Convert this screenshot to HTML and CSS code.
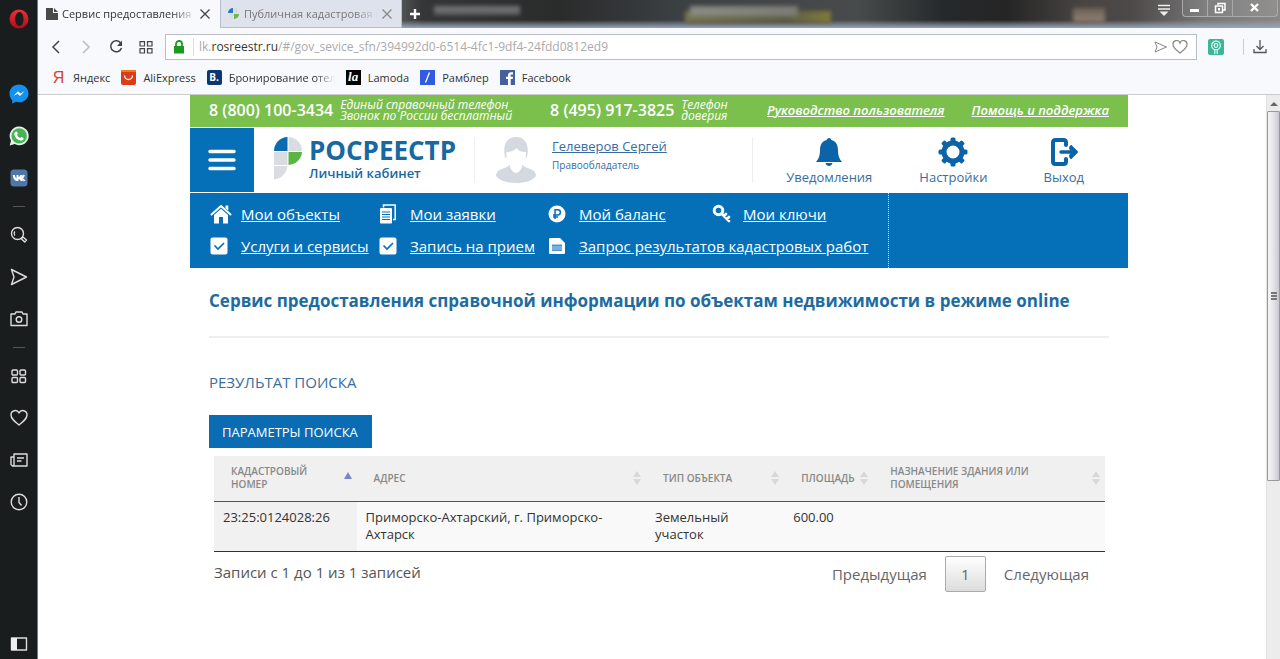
FILE: index.html
```html
<!DOCTYPE html>
<html lang="ru">
<head>
<meta charset="utf-8">
<title>Сервис предоставления справочной информации</title>
<link rel="stylesheet" href="styles.css">
</head>
<body>
<div class="browser">
  <aside class="sidebar">
    <button class="side-btn opera" aria-label="Opera"><svg width="20" height="20" viewBox="0 0 20 20"><defs><linearGradient id="og" x1="0" y1="0" x2="0" y2="1"><stop offset="0" stop-color="#f0303c"/><stop offset="1" stop-color="#a80f1c"/></linearGradient></defs><path fill="url(#og)" fill-rule="evenodd" d="M10 0.500a9.500 9.500 0 1 0 0 19a9.500 9.500 0 1 0 0-19zM10.500 3c2.500 0 4 3 4 7s-1.500 7-4 7s-4.300-3-4.300-7s1.800-7 4.300-7z"/></svg></button>
    <button class="side-btn" aria-label="Messenger"><svg width="20" height="20" viewBox="0 0 20 20"><path fill="#1491ee" d="M10 .5c5.400 0 9.500 3.900 9.500 8.900s-4.100 8.800-9.500 8.800c-1.200 0-2.200-.1-3.200-.4L3.200 19.500v-3.300C1.500 14.600.5 12.200.5 9.400.5 4.400 4.600.5 10 .5z"/><path fill="#fff" d="M4.500 12 9 7.200l2.300 2.300 4.200-2.300-4.500 4.800-2.300-2.300z"/></svg></button>
    <button class="side-btn" aria-label="WhatsApp"><svg width="20" height="20" viewBox="0 0 20 20"><path fill="#e8f0e8" d="M10.200.5a9.400 9.400 0 1 1-4.500 17.600L.7 19.500 2 14.700A9.400 9.400 0 0 1 10.200.5z"/><circle cx="10.200" cy="9.900" r="7.700" fill="#46b455"/><path fill="#fff" d="M7.200 5.400c.6 0 .8.200 1 .7l.6 1.500c.2.500-.6 1-.8 1.400.8 1.500 1.900 2.500 3.300 3.100.5-.3.900-1.200 1.400-1l1.700.9c.4.200.2 1.100-.1 1.600-.6.900-2 1.200-3 .9-3-.8-5.300-3-6-5.500-.3-1.300.6-3.600 1.900-3.600z"/></svg></button>
    <button class="side-btn" aria-label="VK"><svg width="18" height="18" viewBox="0 0 18 18"><rect x=".5" y=".5" width="17" height="17" rx="3.500" fill="#4f78a8"/><path fill="#fff" d="M2.800 6h2c.2 1.700.9 2.800 1.700 3.400V6h2v2c.9-.2 1.500-1 1.900-2h2c-.3 1.300-1.100 2.200-1.800 2.700.9.500 1.900 1.500 2.300 3.300h-2.200c-.3-1-1-1.800-2.200-2V12h-.6C5 12 3 10 2.800 6z"/><path fill="none" stroke="#fff" stroke-width="1.800" d="M10 9c2 0 3.500-1.200 4-3M11 9c1.500.5 2.800 1.300 3.500 3"/></svg></button>
    <hr class="side-rule">
    <button class="side-btn" aria-label="Поиск"><svg width="18" height="18" viewBox="0 0 18 18"><g class="ln"><circle cx="7.500" cy="7.500" r="6"/><path d="M4.800 5.500a3.300 3.300 0 0 0 0 4M12 12l1-1 3.500 3-1.800 2L11.500 13z"/></g></svg></button>
    <button class="side-btn" aria-label="Моя лента"><svg width="18" height="18" viewBox="0 0 18 18"><path class="ln" d="M1.500 1.500 16.500 9l-15 7.500L4 9z"/></svg></button>
    <button class="side-btn" aria-label="Снимок"><svg width="18" height="18" viewBox="0 0 18 18"><g class="ln"><path d="M1 4h4l1-2h6l1 2h4v11.500H1z"/><circle cx="9" cy="9.500" r="2.800"/></g></svg></button>
    <hr class="side-rule">
    <button class="side-btn" aria-label="Экспресс-панель"><svg width="18" height="18" viewBox="0 0 18 18"><g class="ln"><rect x="2" y="3" width="5.500" height="5" rx="1"/><rect x="10" y="3" width="5.500" height="5" rx="1"/><rect x="2" y="10.500" width="5.500" height="5" rx="1"/><rect x="10" y="10.500" width="5.500" height="5" rx="1"/></g></svg></button>
    <button class="side-btn" aria-label="Закладки"><svg width="18" height="18" viewBox="0 0 18 18"><path class="ln" d="M9 16C4 12 1 9.500 1 6a4.200 4.200 0 0 1 8-2 4.200 4.200 0 0 1 8 2c0 3.500-3 6-8 10z"/></svg></button>
    <button class="side-btn" aria-label="Новости"><svg width="18" height="18" viewBox="0 0 18 18"><g class="ln"><path d="M4 3h13v12H2.500L1 13.500V6h3zM4 3v12M7 7h7M7 10h4.500"/></g></svg></button>
    <button class="side-btn" aria-label="История"><svg width="18" height="18" viewBox="0 0 18 18"><g class="ln"><circle cx="9" cy="9" r="7.800"/><path d="M9 4v5.500l2.500 3"/></g></svg></button>
    <button class="side-btn side-last" aria-label="Боковая панель"><svg width="18" height="14" viewBox="0 0 18 14"><rect class="ln" x="1.500" y="1" width="15" height="12"/><path fill="#eee" d="M1 1h6v12H1z"/></svg></button>
  </aside>

  <div class="window">
    <div class="tabs">
      <div class="tab active">
        <svg width="12" height="14" viewBox="0 0 12 14"><path fill="#4a4a4a" d="M0 1h7v5h5v7H0zM8 1l4 4H8z"/></svg>
        <span class="tab-title">Сервис предоставления справочной</span>
        <button class="x" aria-label="Закрыть вкладку"><svg width="10" height="10" viewBox="0 0 10 10"><path stroke="#444" stroke-width="1.300" d="m.5.5 9 9m0-9-9 9"/></svg></button>
      </div>
      <div class="tab">
        <svg width="12" height="14" viewBox="0 0 12 14"><path fill="#2c78b8" d="M0 6a5 5 0 0 1 5-5v5z"/><path fill="#69b84c" d="M6 7h5a5 5 0 0 1-5 5z"/><path fill="#d8dbe0" d="M6 1a5 5 0 0 1 5 5H6zM0 7h5v5z"/></svg>
        <span class="tab-title">Публичная кадастровая карта</span>
        <button class="x" aria-label="Закрыть вкладку"><svg width="10" height="10" viewBox="0 0 10 10"><path stroke="#888" stroke-width="1.300" d="m.5.5 9 9m0-9-9 9"/></svg></button>
      </div>
      <button class="new-tab" aria-label="Новая вкладка"><svg width="12" height="12" viewBox="0 0 12 12"><path stroke="#fff" stroke-width="2.400" d="M6 1v10M1 6h10"/></svg></button>
      <div class="glass"></div>
      <button class="tab-menu" aria-label="Меню вкладок"><svg width="14" height="14" viewBox="0 0 14 14"><path stroke="#eee" stroke-width="1.500" d="M1 2.500h12M1 6h12"/><path fill="#eee" d="M2.500 8.500h9L7 13z"/></svg></button>
      <div class="win-btns">
        <button aria-label="Свернуть"><svg width="12" height="12" viewBox="0 0 12 12"><path fill="#fff" d="M1 7h9v3H1z"/></svg></button>
        <button aria-label="Развернуть"><svg width="12" height="12" viewBox="0 0 12 12"><path fill="none" stroke="#fff" stroke-width="1.500" d="M4 3V1.500h7V8H9M1.500 4h7v6.500h-7z"/><path fill="#fff" d="M4 6h2v2.500H4z"/></svg></button>
        <button class="win-close" aria-label="Закрыть"><svg width="12" height="12" viewBox="0 0 12 12"><path stroke="#fff" stroke-width="2.400" d="m2 2 7 7m0-7-7 7"/></svg></button>
      </div>
    </div>

    <div class="toolbar">
      <button aria-label="Назад"><svg width="14" height="16" viewBox="0 0 14 16"><path fill="none" stroke="#444" stroke-width="1.500" d="M10 2 4 8l6 6"/></svg></button>
      <button aria-label="Вперёд"><svg width="14" height="16" viewBox="0 0 14 16"><path fill="none" stroke="#bbb" stroke-width="1.500" d="m4 2 6 6-6 6"/></svg></button>
      <button aria-label="Обновить"><svg width="14" height="16" viewBox="0 0 14 16"><path fill="none" stroke="#444" stroke-width="1.500" d="M12 4.500A5.500 5.500 0 1 0 12.500 9"/><path fill="#444" d="M13 1.500V7H8z"/></svg></button>
      <button aria-label="Экспресс-панель"><svg width="14" height="16" viewBox="0 0 14 16"><path fill="none" stroke="#444" stroke-width="1.200" d="M1 2.600h4.500V7H1zM8.500 2.600H13V7H8.500zM1 9.600h4.500V14H1zM8.500 9.600H13V14H8.500z"/></svg></button>
      <div class="address">
        <svg width="12" height="14" viewBox="0 0 12 14"><path fill="#1a9a1f" d="M1 6h10v7.500H1z"/><path fill="none" stroke="#1a9a1f" stroke-width="1.800" d="M3 7V4a3 3 0 0 1 6 0v3"/></svg>
        <span class="url">lk.<b>rosreestr.ru</b>/#/gov_sevice_sfn/394992d0-6514-4fc1-9df4-24fdd0812ed9</span>
        <button aria-label="Отправить"><svg width="14" height="12" viewBox="0 0 14 12"><path fill="none" stroke="#888" d="M1 1l11.500 5L1 11l2-5z"/></svg></button>
        <button aria-label="В избранное"><svg width="16" height="14" viewBox="0 0 16 14"><path fill="none" stroke="#888" stroke-width="1.200" d="M8 13C4 10 1 7.500 1 4.500A3.600 3.600 0 0 1 8 3a3.600 3.600 0 0 1 7 1.500C15 7.500 12 10 8 13z"/></svg></button>
      </div>
      <button class="ext" aria-label="Расширение"><svg width="16" height="16" viewBox="0 0 16 16"><rect width="16" height="16" rx="2" fill="#3fb598"/><g fill="none" stroke="#d8fff4" stroke-width="1.200"><circle cx="8" cy="6.500" r="4.300"/><circle cx="8" cy="6.500" r="1.800"/><path d="M6.800 11v4M9.200 11v4"/></g></svg></button>
      <span class="vline"></span>
      <button aria-label="Загрузки"><svg width="14" height="14" viewBox="0 0 14 14"><path fill="none" stroke="#555" stroke-width="1.300" d="M7 0v9M3.500 6 7 9.500 10.500 6M1 9v3.500h12V9"/></svg></button>
    </div>

    <nav class="bookmarks" aria-label="Панель закладок">
      <a href="#"><span class="fav ya">Я</span>Яндекс</a>
      <a href="#"><svg width="15" height="15" viewBox="0 0 15 15"><rect width="15" height="15" rx="2" fill="#dc3b17"/><path fill="#f07a1e" d="M0 0h15v2H0z"/><path fill="none" stroke="#fff" stroke-width="1.300" d="M3.500 5.500a4 4 0 0 0 8 0"/></svg>AliExpress</a>
      <a href="#"><span class="fav bk">B.</span><span class="fade-text">Бронирование отелей</span></a>
      <a href="#"><span class="fav la">la</span>Lamoda</a>
      <a href="#"><svg width="15" height="15" viewBox="0 0 15 15"><path fill="#315be0" d="M0 0h15v15H0z"/><path stroke="#fff" stroke-width="1.300" d="M9.500 2.500l-4 10"/></svg>Рамблер</a>
      <a href="#"><svg width="15" height="15" viewBox="0 0 15 15"><path fill="#45619d" d="M0 0h15v15H0z"/><path fill="#fff" d="M8 15V9H6V6.800h2V5.300C8 3.300 9.200 2.300 11 2.300h2v2.300h-1.300c-.8 0-1 .3-1 1v1.200H13L12.700 9h-2v6z"/></svg>Facebook</a>
    </nav>

    <div class="viewport">
      <div class="page">
        <header>
          <div class="top">
            <span class="phone">8 (800) 100-3434</span>
            <em class="note note-wide">Единый справочный телефон<br>Звонок по России бесплатный</em>
            <span class="phone">8 (495) 917-3825</span>
            <em class="note">Телефон<br>доверия</em>
            <a class="help first" href="#">Руководство пользователя</a>
            <a class="help" href="#">Помощь и поддержка</a>
          </div>
          <div class="head">
            <button class="burger" aria-label="Меню"><svg width="28" height="22" viewBox="0 0 28 22"><path stroke="#fff" stroke-width="3.500" stroke-linecap="round" d="M2 2.500h24M2 11h24M2 19.500h24"/></svg></button>
            <a class="logo" href="#">
              <svg width="28" height="43" viewBox="0 0 28 43"><path fill="#0b6bb0" d="M0 14A14 14 0 0 1 13.500 0v14z"/><path fill="#d9dde2" d="M14.500 0A14 14 0 0 1 28 14H14.500zM0 15h13.500v13H0zM0 29h13.500A15 15 0 0 1 0 42.500z"/><path fill="#5ab543" d="M14.500 15H28a14 14 0 0 1-13.500 13z"/></svg>
              <span class="logo-text"><strong>РОСРЕЕСТР</strong><span>Личный кабинет</span></span>
            </a>
            <div class="user">
              <svg width="40" height="46" viewBox="0 0 40 46"><path fill="#d3d9df" d="M0 39c0-6 6-7 11-9l3-2h12l3 2c5 2 11 3 11 9-4 5-11 7-20 7S4 44 0 39z"/><path fill="#fff" d="M14 25h12v5c-1 3-4 6-6 6s-5-3-6-6z"/><path fill="#d3d9df" d="M8.500 17C7 6 12 0 20 0s13 6 11.500 17c0 3-1 4-2 4h-19c-1 0-2-1-2-4z"/><path fill="#fff" d="M10.500 15c6 0 8-2 10-4 2 3 5 4 9.500 4 1 8-4 15-10 15s-10.500-7-9.500-15z"/></svg>
              <div class="user-text"><a href="#">Гелеверов Сергей</a><span>Правообладатель</span></div>
            </div>
            <div class="actions">
              <a href="#"><svg width="28" height="30" viewBox="0 0 28 30"><path fill="#0b64a8" d="M14 1c1.500 0 2 1 2.200 2C21 4 23 8 23 13c0 6 1.500 9 4 12H1c2.500-3 4-6 4-12 0-5 2-9 6.800-10 .2-1 .7-2 2.200-2zM10.500 26h7c-.5 2-2 3-3.500 3s-3-1-3.500-3z"/></svg>Уведомления</a>
              <a href="#"><svg width="30" height="30" viewBox="-15 -15 30 30"><g fill="#0b64a8"><path fill-rule="evenodd" d="M0-11.500a11.500 11.500 0 1 0 0 23a11.500 11.500 0 1 0 0-23zM0-6.500a6.500 6.500 0 1 1 0 13a6.500 6.500 0 1 1 0-13z"/><g id="cog"><rect x="-2.500" y="-14.500" width="5" height="5" rx="1.500"/><rect x="-2.500" y="9.500" width="5" height="5" rx="1.500"/><rect x="-14.500" y="-2.500" width="5" height="5" rx="1.500"/><rect x="9.500" y="-2.500" width="5" height="5" rx="1.500"/></g><use href="#cog" transform="rotate(45)"/></g></svg>Настройки</a>
              <a href="#"><svg width="28" height="30" viewBox="0 0 28 30"><path fill="none" stroke="#0b64a8" stroke-width="4" stroke-linecap="round" stroke-linejoin="round" d="M16 8V5.500C16 4 15 3 13.500 3h-8C4 3 3 4 3 5.500v19C3 26 4 27 5.500 27h8c1.500 0 2.500-1 2.500-2.500V22"/><path stroke="#0b64a8" stroke-width="3.500" stroke-linecap="round" d="M11 15h12"/><path fill="#0b64a8" stroke="#0b64a8" stroke-width="2" stroke-linejoin="round" d="m21 9 6 6-6 6-1-2 2-4-2-4z"/></svg>Выход</a>
            </div>
          </div>
          <nav class="menu" aria-label="Разделы">
            <div class="menu-grid">
              <a href="#"><svg width="22" height="20" viewBox="0 0 22 20"><path fill="none" stroke="#fff" stroke-width="2" stroke-linecap="round" stroke-linejoin="round" d="M1.500 10.500 11 2l9.500 8.500"/><path fill="#fff" d="M15.500 1.500h2.800v5l-2.800-2.300zM4 11l7-6.200 7 6.200v8.500h-5V13H9v6.500H4z"/></svg><span>Мои объекты</span></a>
              <a href="#"><svg width="18" height="20" viewBox="0 0 18 20"><path fill="none" stroke="#fff" stroke-width="1.500" d="M4.500 3.500V1h11.700v14.500H14"/><rect x="1" y="4" width="12" height="15.500" rx="1" fill="#fff"/><path stroke="#0570b8" d="M3 8h8M3 10.500h8M3 13h8M3 15.500h8"/></svg><span>Мои заявки</span></a>
              <a href="#"><svg width="18" height="18" viewBox="0 0 18 18"><circle cx="9" cy="9" r="8.500" fill="#fff"/><path fill="none" stroke="#0570b8" stroke-width="1.500" d="M7 14V4.700h2.800a2.600 2.600 0 0 1 0 5.200H5M5 12h5"/></svg><span>Мой баланс</span></a>
              <a href="#"><svg width="20" height="20" viewBox="0 0 20 20"><g fill="none" stroke="#fff" stroke-linecap="round"><circle cx="6.500" cy="6.500" r="4.300" stroke-width="3"/><path stroke-width="2.700" d="m10 10 7 7M15 15l2-2M12 12l2-2"/></g></svg><span>Мои ключи</span></a>
              <a href="#"><svg width="18" height="18" viewBox="0 0 18 18"><rect x=".5" y=".5" width="17" height="17" rx="2" fill="#fff"/><path fill="none" stroke="#0570b8" stroke-width="1.700" d="m4.500 8.500 3.500 3.500 6-6"/></svg><span>Услуги и сервисы</span></a>
              <a href="#"><svg width="18" height="18" viewBox="0 0 18 18"><rect x=".5" y=".5" width="17" height="17" rx="2" fill="#fff"/><path fill="none" stroke="#0570b8" stroke-width="1.700" d="m4.500 8.500 3.500 3.500 6-6"/></svg><span>Запись на прием</span></a>
              <a href="#" class="wide"><svg width="18" height="18" viewBox="0 0 18 18"><path fill="#fff" d="M1 2.500C1 1.500 1.500 1 2.500 1H12l5 5v9.500c0 1-.5 1.500-1.500 1.500h-13C1.500 17 1 16.500 1 15.500z"/><path fill="#4b95cc" d="M4 7.500h10V14H4z"/><path stroke="#a9cde8" d="M4 10h10M4 12h10"/></svg><span>Запрос результатов кадастровых работ</span></a>
            </div>
          </nav>
        </header>
        <main>
          <h1>Сервис предоставления справочной информации по объектам недвижимости в режиме online</h1>
          <h2>РЕЗУЛЬТАТ ПОИСКА</h2>
          <button class="params">ПАРАМЕТРЫ ПОИСКА</button>
          <div class="results">
            <table>
              <colgroup><col class="c1"><col class="c2"><col class="c3"><col class="c4"><col class="c5"></colgroup>
              <thead><tr>
                <th scope="col"><div class="th"><span>КАДАСТРОВЫЙ НОМЕР</span><svg width="8" height="14" viewBox="0 0 8 14"><path fill="#7a84c8" d="M0 8l4-7 4 7z"/></svg></div></th>
                <th scope="col"><div class="th"><span>АДРЕС</span><svg width="8" height="14" viewBox="0 0 8 14"><path fill="#d8d8d8" d="M0 6l4-6 4 6zM0 8h8l-4 6z"/></svg></div></th>
                <th scope="col"><div class="th"><span>ТИП ОБЪЕКТА</span><svg width="8" height="14" viewBox="0 0 8 14"><path fill="#d8d8d8" d="M0 6l4-6 4 6zM0 8h8l-4 6z"/></svg></div></th>
                <th scope="col"><div class="th"><span>ПЛОЩАДЬ</span><svg width="8" height="14" viewBox="0 0 8 14"><path fill="#d8d8d8" d="M0 6l4-6 4 6zM0 8h8l-4 6z"/></svg></div></th>
                <th scope="col"><div class="th"><span>НАЗНАЧЕНИЕ ЗДАНИЯ ИЛИ<br>ПОМЕЩЕНИЯ</span><svg width="8" height="14" viewBox="0 0 8 14"><path fill="#d8d8d8" d="M0 6l4-6 4 6zM0 8h8l-4 6z"/></svg></div></th>
              </tr></thead>
              <tbody><tr><td class="sorted">23:25:0124028:26</td><td>Приморско-Ахтарский, г. Приморско-Ахтарск</td><td>Земельный участок</td><td>600.00</td><td></td></tr></tbody>
            </table>
            <div class="pager">
              <span class="info">Записи с 1 до 1 из 1 записей</span>
              <button class="pg">Предыдущая</button>
              <button class="pg current">1</button>
              <button class="pg">Следующая</button>
            </div>
          </div>
        </main>
      </div>
      <div class="scrollbar">
        <svg class="arrow" width="8" height="5" viewBox="0 0 8 5"><path fill="#666" d="M0 5l4-4 4 4z"/></svg>
        <div class="thumb"><i></i><i></i><i></i></div>
      </div>
    </div>
  </div>
</div>
</body>
</html>
```

FILE: styles.css
```css
* { box-sizing: border-box; }
body { margin: 0; font-family: "Open Sans", "Noto Sans", sans-serif; color: #333; }
button { border: 0; padding: 0; background: none; font: inherit; color: inherit; cursor: pointer; }
svg { display: block; flex: none; }
.browser { display: flex; min-height: 100vh; background: #fff; }

/* Opera sidebar */
.sidebar { width: 38px; flex: none; display: flex; flex-direction: column; background: #1a1d1e; border-right: 1px solid #777; }
.side-btn { height: 42px; display: grid; place-items: center; }
.opera { height: 37px; margin-bottom: 36px; }
.side-last { height: 30px; margin-top: auto; }
.side-rule { width: 12px; height: 1px; margin: 7px auto; border: 0; background: #555; }
.ln { fill: none; stroke: #ddd; stroke-width: 1.4; stroke-linejoin: round; }

.window { flex: 1; min-width: 0; display: flex; flex-direction: column; }

/* Tabs */
.tabs { display: flex; height: 28px; background: linear-gradient(#0000 20px, #98a5b8), linear-gradient(90deg, #666 28%, #343637 31%, #2a2b2b 42%, #3c4144 52%, #484b4b 66%, #25292b 73%, #252525 78%, #484442 84%, #4c4948 88%, #777 94%, #8a8887); }
.tab { width: 182px; display: flex; align-items: center; gap: 4px; padding: 0 9px 0 7px; background: #dee2ed; border: 1px solid #b6bdd0; border-top: 0; font-size: 11px; color: #777; }
.tab.active { background: #f7f9fc; color: #333; border-color: #f7f9fc; }
.tab-title { flex: 1; overflow: hidden; white-space: nowrap; mask-image: linear-gradient(90deg, #000 82%, transparent); }
.new-tab { width: 26px; display: grid; place-items: center; }
.glass { flex: 1; height: 24px; filter: blur(2px); background-image: linear-gradient(#77797a, #5c5e5e), linear-gradient(90deg, #8a8a82, #7c7c74), linear-gradient(90deg, #77744f, #5f5d46 70%, #807a3a), linear-gradient(#6d6058, #93806f); background-size: 86px 9px, 108px 10px, 146px 12px, 32px 14px; background-position: 1% 40%, 43% 40%, 45% 95%, 94% 80%; background-repeat: no-repeat; }
.tab-menu { width: 36px; height: 19px; display: grid; place-items: center; }
.win-btns { display: flex; height: 17px; margin-right: 2px; border: 1px solid #aaa; border-top: 0; border-radius: 0 0 4px 4px; }
.win-btns button { width: 25px; display: grid; place-items: center; border-right: 1px solid #aaa; background: #fff1; }
.win-btns .win-close { width: 44px; border: 0; }

/* Address row */
.toolbar { display: flex; align-items: center; gap: 16px; height: 37px; padding: 0 13px 0 11px; background: #f7f9fc; }
.address { flex: 1; display: flex; align-items: center; gap: 4px; height: 26px; margin-left: -4px; padding: 0 8px 0 7px; background: #fff; border: 1px solid #b9bec6; }
.url { flex: 1; margin-left: 4px; padding-left: 5px; border-left: 1px solid #ddd; font-size: 12px; line-height: 18px; color: #aaa; white-space: nowrap; }
.url b { font-weight: 400; color: #333; }
.ext { margin-left: -5px; }
.vline { width: 1px; height: 16px; margin-left: 3px; margin-right: -7px; background: #ccc; }
.bookmarks { display: flex; align-items: center; gap: 11px; height: 30px; padding: 0 13px 4px; background: #f7f9fc; border-bottom: 1px solid #ccc; font-size: 11px; }
.bookmarks a { display: flex; align-items: center; gap: 7px; color: #333; text-decoration: none; white-space: nowrap; }
.fav { width: 15px; height: 15px; text-align: center; font: bold 10px/15px "Open Sans", sans-serif; color: #fff; }
.ya { font: 16px/15px "Liberation Sans", sans-serif; color: #d8432e; }
.bk { background: #0d3474; border-radius: 2px; }
.la { background: #000; font: italic bold 13px/14px "Liberation Serif", serif; }
.fade-text { width: 106px; overflow: hidden; mask-image: linear-gradient(90deg, #000 82%, transparent); }

/* Page */
.viewport { flex: 1; display: flex; }
.page { flex: 1; min-width: 0; padding: 0 138px 0 152px; }
.top { display: flex; align-items: center; height: 32px; padding: 0 19px 2px; background: #7bc04d; color: #fff; white-space: nowrap; }
.phone { font-size: 16px; font-weight: 600; }
.note { margin-left: 7px; font-size: 12px; line-height: 11px; }
.note-wide { margin-right: 38px; }
.help { margin-left: 27px; font-size: 13px; font-style: italic; font-weight: 600; color: #fff; }
.help.first { margin-left: auto; }
.head { display: flex; height: 66px; padding: 1px 0; }
.burger { width: 64px; display: grid; place-items: center; background: #0570b8; }
.logo { display: flex; gap: 7px; padding: 9px 18px 0 20px; color: #17699f; text-decoration: none; }
.logo-text { display: flex; flex-direction: column; }
.logo-text strong { font-size: 26px; line-height: 26px; }
.logo-text span { font-size: 13px; line-height: 20px; font-weight: 600; }
.user { flex: 1; display: flex; gap: 16px; margin: 9px 0; padding-left: 21px; border-left: 1px solid #eee; border-right: 1px solid #eee; color: #386e9f; }
.user-text { display: flex; flex-direction: column; }
.user-text a { font-size: 13px; line-height: 18px; color: #386e9f; }
.user-text span { font-size: 10px; line-height: 20px; }
.actions { display: flex; gap: 47px; padding: 9px 44px 0 33px; }
.actions a { display: flex; flex-direction: column; align-items: center; font-size: 13px; line-height: 21px; color: #386e9f; text-decoration: none; }
.actions a:last-child { margin-left: 9px; }
.menu { display: flex; height: 75px; background: #0570b8; }
.menu-grid { flex: 0 0 699px; display: grid; grid-template-columns: 169px 169px 164px auto; grid-auto-rows: 32px; padding: 5px 0 0 20px; border-right: 1px dotted #cde; }
.menu a { display: grid; grid-template-columns: 31px auto; align-items: center; justify-content: start; font-size: 15px; color: #fff; white-space: nowrap; text-decoration: none; }
.menu a span { text-decoration: underline; }
.wide { grid-column: span 2; }

main { padding: 20px 19px; }
h1, h2 { white-space: nowrap; }
h1 { margin: 0 0 33px; padding-bottom: 22px; border-bottom: 2px solid #eee; font-size: 17px; line-height: 26px; font-weight: 700; color: #1d6b9f; }
h2 { margin: 0 0 22px; font-size: 15px; line-height: 22px; font-weight: 400; color: #386e9f; }
.params { display: block; height: 33px; padding: 0 14px 0 13px; background: #0a6cb3; color: #fff; font-size: 13px; }
.results { margin: 8px 4px 0 5px; }
table { width: 100%; table-layout: fixed; border-collapse: collapse; border-bottom: 1px solid #333; }
.c1 { width: 16%; }
.c2 { width: 32.5%; }
.c3 { width: 15.5%; }
.c4 { width: 10%; }
.c5 { width: 26%; }
th { height: 45px; padding: 0 5px 0 17px; background: #f0f0f0; border-bottom: 1px solid #555; text-align: left; font-size: 10px; line-height: 13px; font-weight: 600; color: #888; }
.th { display: flex; align-items: center; justify-content: space-between; }
td { height: 50px; padding: 7px 9px; vertical-align: top; background: #f9f9f9; font-size: 13px; line-height: 17px; color: #333; }
td.sorted { background: #f1f1f1; }
.pager { display: flex; align-items: start; padding: 4px 1px 0 0; font-size: 15px; color: #666; }
.info { flex: 1; line-height: 32px; color: #555; }
.pg { height: 36px; padding: 0 15px; }
.current { width: 41px; margin: 0 3px; border: 1px solid #aaa; border-radius: 2px; background: linear-gradient(#fff, #dcdcdc); }

.scrollbar { width: 14px; background: #ececec; border-left: 1px solid #e2e2e2; }
.arrow { margin: 6px auto 5px; }
.thumb { height: 370px; display: flex; flex-direction: column; align-items: center; justify-content: center; gap: 1px; border: 1px solid #999; border-radius: 1px; background: linear-gradient(90deg, #f5f5f5, #e4e4e8 50%, #c8c8d0); }
.thumb i { width: 6px; height: 2px; background: #777; }
```
